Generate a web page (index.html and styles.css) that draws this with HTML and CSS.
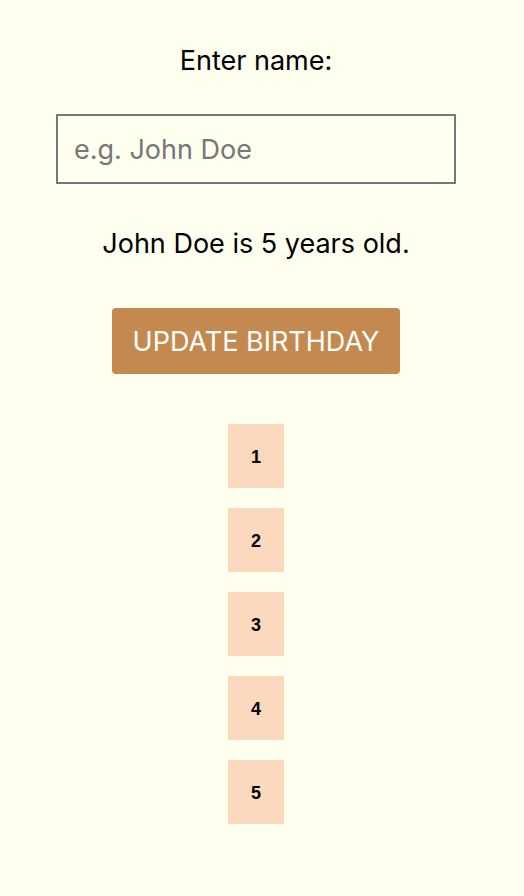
FILE: index.html
```html
<!DOCTYPE html>
<html>
<head>
<meta charset="utf-8">
<link rel="stylesheet" href="styles.css">
</head>
<body>
<main class="app">
  <label class="label" for="name">Enter name:</label>
  <input class="name-input" id="name" type="text" placeholder="e.g. John Doe">
  <p class="message">John Doe is 5 years old.</p>
  <button class="update-btn">Update Birthday</button>
  <ul class="boxes">
    <li class="box">1</li>
    <li class="box">2</li>
    <li class="box">3</li>
    <li class="box">4</li>
    <li class="box">5</li>
  </ul>
</main>
</body>
</html>
```

FILE: styles.css
```css
html, body {
  margin: 0;
  padding: 0;
  background: #fffff0;
}
body {
  font-family: Inter, "Noto Sans", sans-serif;
  color: #000;
}
.app {
  display: flex;
  flex-direction: column;
  align-items: center;
  padding-top: 45px;
  width: 512px;
}
.label {
  font-size: 27px;
  line-height: 32px;
  height: 32px;
}
.name-input {
  margin-top: 37px;
  box-sizing: border-box;
  width: 400px;
  height: 70px;
  border: 2px solid #777;
  background: transparent;
  padding: 0 16px;
  font-family: inherit;
  font-size: 27px;
  color: #000;
  outline: none;
}
.name-input::placeholder {
  color: #777;
}
.message {
  margin: 44px 0 0;
  font-size: 27px;
  line-height: 32px;
}
.update-btn {
  margin-top: 48px;
  width: 288px;
  height: 66px;
  border: none;
  border-radius: 4px;
  background: #c4894e;
  color: #fff;
  font-family: inherit;
  font-size: 27px;
  text-transform: uppercase;
  padding: 0;
}
.boxes {
  list-style: none;
  margin: 50px 0 0;
  padding: 0;
  display: flex;
  flex-direction: column;
  gap: 20px;
}
.box {
  box-sizing: border-box;
  width: 56px;
  height: 64px;
  padding-top: 3px;
  background: #fad9be;
  display: flex;
  align-items: center;
  justify-content: center;
  font-family: "Liberation Sans", Arial, sans-serif;
  font-weight: bold;
  font-size: 18px;
}
```
